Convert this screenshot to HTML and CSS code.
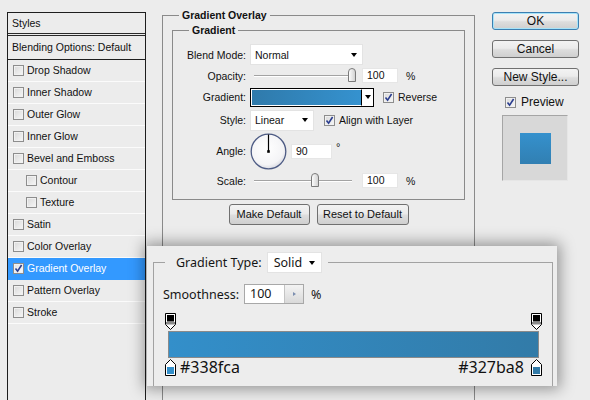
FILE: index.html
```html
<!DOCTYPE html>
<html>
<head>
<meta charset="utf-8">
<link rel="stylesheet" href="styles.css">
</head>
<body>
<div class="dialog">
  <div class="styles-panel">
    <div class="sp-head">Styles</div>
    <div class="sp-blend">Blending Options: Default</div>
    <div class="sp-row"><span class="cb"></span>Drop Shadow</div>
    <div class="sp-row"><span class="cb"></span>Inner Shadow</div>
    <div class="sp-row"><span class="cb"></span>Outer Glow</div>
    <div class="sp-row"><span class="cb"></span>Inner Glow</div>
    <div class="sp-row"><span class="cb"></span>Bevel and Emboss</div>
    <div class="sp-row sub"><span class="cb"></span>Contour</div>
    <div class="sp-row sub"><span class="cb"></span>Texture</div>
    <div class="sp-row"><span class="cb"></span>Satin</div>
    <div class="sp-row"><span class="cb"></span>Color Overlay</div>
    <div class="sp-row sel"><span class="cb"><svg width="9" height="9" viewBox="0 0 9 9"><path d="M1.5 4.5 L3.6 7.2 L7.6 1" fill="none" stroke="#2a3d8f" stroke-width="1.6"/></svg></span>Gradient Overlay</div>
    <div class="sp-row"><span class="cb"></span>Pattern Overlay</div>
    <div class="sp-row"><span class="cb"></span>Stroke</div>
  </div>

  <div class="main">
    <fieldset class="fs-outer">
      <legend class="lg-outer">Gradient Overlay</legend>
      <fieldset class="fs-inner">
        <legend class="lg-inner">Gradient</legend>
        <div class="row r1">
          <span class="lbl">Blend Mode:</span>
          <div class="select sel-blend"><span>Normal</span><i class="arr"></i></div>
        </div>
        <div class="row r2">
          <span class="lbl">Opacity:</span>
          <div class="slider">
            <div class="track"></div>
            <svg class="thumb thumb-op" width="10" height="14" viewBox="0 0 10 14"><defs><linearGradient id="tg" x1="0" x2="1"><stop offset="0" stop-color="#fff"/><stop offset="1" stop-color="#cfcfcf"/></linearGradient></defs><path d="M1.5 4 Q1.5 0.5 5 0.5 Q8.5 0.5 8.5 4 V13.5 H1.5 Z" fill="url(#tg)" stroke="#7a7a7a"/></svg>
          </div>
          <div class="num">100</div>
          <span class="unit">%</span>
        </div>
        <div class="row r3">
          <span class="lbl">Gradient:</span>
          <div class="gpick"><div class="gswatch"></div><div class="gdrop"><i class="arr"></i></div></div>
          <span class="cb on cb-rev"><svg width="9" height="9" viewBox="0 0 9 9"><path d="M1.5 4.5 L3.6 7.2 L7.6 1" fill="none" stroke="#2a3d8f" stroke-width="1.6"/></svg></span>
          <span class="cbl">Reverse</span>
        </div>
        <div class="row r4">
          <span class="lbl">Style:</span>
          <div class="select sel-style"><span>Linear</span><i class="arr"></i></div>
          <span class="cb on cb-align"><svg width="9" height="9" viewBox="0 0 9 9"><path d="M1.5 4.5 L3.6 7.2 L7.6 1" fill="none" stroke="#2a3d8f" stroke-width="1.6"/></svg></span>
          <span class="cbl">Align with Layer</span>
        </div>
        <div class="row r5">
          <span class="lbl">Angle:</span>
          <svg class="dial" width="37" height="37" viewBox="0 0 37 37"><defs><radialGradient id="dg" cx="0.45" cy="0.4" r="0.6"><stop offset="0" stop-color="#ffffff"/><stop offset="0.8" stop-color="#f4f4f6"/><stop offset="1" stop-color="#dcdde4"/></radialGradient></defs><circle cx="18.5" cy="18.5" r="17.3" fill="url(#dg)" stroke="#4d5b84" stroke-width="1.3"/><line x1="18.5" y1="18.5" x2="18.5" y2="1.5" stroke="#000" stroke-width="1.2"/><rect x="17.2" y="17.2" width="2.6" height="2.6" fill="#000"/></svg>
          <div class="num num-angle">90</div>
          <span class="deg">°</span>
        </div>
        <div class="row r6">
          <span class="lbl">Scale:</span>
          <div class="slider">
            <div class="track"></div>
            <svg class="thumb thumb-sc" width="10" height="14" viewBox="0 0 10 14"><path d="M1.5 4 Q1.5 0.5 5 0.5 Q8.5 0.5 8.5 4 V13.5 H1.5 Z" fill="url(#tg)" stroke="#7a7a7a"/></svg>
          </div>
          <div class="num">100</div>
          <span class="unit">%</span>
        </div>
      </fieldset>
      <div class="btns">
        <div class="btn btn-make">Make Default</div>
        <div class="btn btn-reset">Reset to Default</div>
      </div>
    </fieldset>
  </div>

  <div class="side">
    <div class="pbtn ok">OK</div>
    <div class="pbtn">Cancel</div>
    <div class="pbtn">New Style...</div>
    <div class="prev-row"><span class="cb on"><svg width="9" height="9" viewBox="0 0 9 9"><path d="M1.5 4.5 L3.6 7.2 L7.6 1" fill="none" stroke="#2a3d8f" stroke-width="1.6"/></svg></span><span>Preview</span></div>
    <div class="prev-box"><div class="prev-sq"></div></div>
  </div>
</div>

<div class="popup">
  <fieldset class="fs-pop">
    <legend class="lg-pop"><span>Gradient Type:</span><div class="select sel-type"><span>Solid</span><i class="arr"></i></div></legend>
    <div class="smooth">
      <span>Smoothness:</span>
      <div class="sinput"><span class="sval">100</span><span class="spin"><i class="rtri"></i></span></div>
      <span class="spct">%</span>
    </div>
    <div class="stops">
      <svg width="11" height="17" viewBox="0 0 11 17"><path d="M0.5 0.5 H10.5 V11.5 L5.5 16.5 L0.5 11.5 Z" fill="#fff" stroke="#000"/><rect x="2" y="2" width="7" height="6.5" fill="#000"/><rect x="1" y="9" width="9" height="2.5" fill="#8a8a8a"/></svg>
      <svg width="11" height="17" viewBox="0 0 11 17"><path d="M0.5 0.5 H10.5 V11.5 L5.5 16.5 L0.5 11.5 Z" fill="#fff" stroke="#000"/><rect x="2" y="2" width="7" height="6.5" fill="#000"/><rect x="1" y="9" width="9" height="2.5" fill="#8a8a8a"/></svg>
    </div>
    <div class="gbar"></div>
    <div class="cstops">
      <div class="cst"><svg width="11" height="17" viewBox="0 0 11 17"><path d="M5.5 0.5 L10.5 5.5 V16.5 H0.5 V5.5 Z" fill="#fff" stroke="#000"/><rect x="2" y="8" width="7" height="7" fill="#338fca"/></svg><span class="hex">#338fca</span></div>
      <div class="cst"><span class="hex">#327ba8</span><svg width="11" height="17" viewBox="0 0 11 17"><path d="M5.5 0.5 L10.5 5.5 V16.5 H0.5 V5.5 Z" fill="#fff" stroke="#000"/><rect x="2" y="8" width="7" height="7" fill="#327ba8"/></svg></div>
    </div>
  </fieldset>
</div>
</body>
</html>
```

FILE: styles.css
```css
* { box-sizing: border-box; }

body {
  margin: 0;
  width: 590px;
  height: 400px;
  overflow: hidden;
  position: relative;
  background: #ececec;
  font-family: "Liberation Sans", Arial, sans-serif;
  font-size: 10.5px;
  color: #111;
}

.dialog {
  display: flex;
  align-items: flex-start;
  height: 400px;
  overflow: hidden;
}

/* ---------- Styles list ---------- */
.styles-panel {
  flex: none;
  margin-left: 7px;
  margin-top: 12px;
  width: 139px;
  height: 388px;
  border: 1px solid #1e1e1e;
  border-bottom: none;
}

.sp-head {
  height: 23px;
  line-height: 20px;
  padding-left: 4px;
  border-bottom: 3px double #2a2a2a;
}

.sp-blend {
  height: 24px;
  line-height: 22px;
  padding-left: 4px;
  border-bottom: 1px solid #1e1e1e;
}

.sp-row {
  height: 22px;
  border-bottom: 1px solid #fbfbfb;
  display: flex;
  align-items: center;
  padding-left: 5px;
  padding-bottom: 1px;
  gap: 3px;
}

.sp-row.sub { padding-left: 18px; }

.sp-row.sel {
  background: #3399ff;
  color: #fff;
  border-bottom-color: #3399ff;
}

.cb {
  flex: none;
  width: 11px;
  height: 11px;
  border: 1px solid #8d8d8d;
  background: linear-gradient(135deg, #d9d9d9, #f7f7f7);
  box-shadow: inset 0 0 0 1px #f1f1f1;
  display: flex;
  align-items: center;
  justify-content: center;
}

.sp-row.sel .cb { background: linear-gradient(135deg, #e2e2e2, #fbfbfb); }

/* ---------- Middle ---------- */
.main {
  flex: none;
  margin-left: 16px;
}

.fs-outer {
  margin: 8px 0 0;
  padding: 1px 9px 0;
  width: 313px;
  height: 400px;
  border: 1px solid #8a8a8a;
  min-width: 0;
}

.lg-outer, .lg-inner {
  font-weight: bold;
  line-height: 14px;
  padding: 0 3px;
  color: #111;
}

.lg-outer { margin-left: 7px; }
.lg-inner { margin-left: 16px; }

.fs-inner {
  margin: 0;
  padding: 0 0 8px;
  border: 1px solid #8a8a8a;
  min-width: 0;
}

.row {
  display: flex;
  align-items: center;
}

.lbl {
  flex: none;
  width: 73px;
  margin-right: 4px;
  text-align: right;
}

.r1 { height: 21px; margin-top: 7px; }
.r2 { height: 21px; }
.r3 { height: 22px; }
.r4 { height: 24px; }
.r5 { height: 38px; }
.r6 { height: 21px; }

.select {
  position: relative;
  height: 21px;
  background: #fff;
  border: 1px solid #e3e3e3;
  display: flex;
  align-items: center;
  justify-content: space-between;
  padding: 0 5px 0 4px;
}

.sel-blend { width: 113px; }
.sel-style { width: 64px; }

.arr {
  display: block;
  width: 0;
  height: 0;
  border-left: 3.5px solid transparent;
  border-right: 3.5px solid transparent;
  border-top: 4px solid #000;
}

.slider {
  position: relative;
  width: 108px;
  height: 15px;
  flex: none;
}

.track {
  position: absolute;
  left: 4px;
  top: 7px;
  width: 98px;
  height: 2px;
  border-top: 1px solid #a3a3a3;
  border-bottom: 1px solid #fff;
}

.thumb { position: absolute; top: 0; }
.thumb-op { left: 97px; }
.thumb-sc { left: 60px; }

.num {
  flex: none;
  width: 36px;
  height: 15px;
  margin-left: 4px;
  background: #fff;
  border: 1px solid #e6e6e6;
  padding-left: 4px;
  line-height: 13px;
}

.unit { margin-left: 8px; }

.gpick {
  flex: none;
  width: 124px;
  height: 19px;
  border: 1px solid #000;
  display: flex;
  background: #fff;
}

.gswatch {
  flex: 1;
  border: 1px solid #fff;
  border-right: 1px solid #000;
  background: linear-gradient(to right, #2f7aab, #3592cf);
}

.gdrop {
  width: 11px;
  display: flex;
  align-items: center;
  justify-content: center;
}

.cb-rev { margin-left: 9px; }
.cb-align { margin-left: 10px; }
.cbl { margin-left: 4px; }

.dial { flex: none; margin-left: 0; }
.num-angle { width: 41px; margin-left: 4px; }
.deg { align-self: flex-start; margin-top: 9px; margin-left: 4px; font-size: 11px; }

.btns {
  display: flex;
  justify-content: center;
  gap: 7px;
  margin-top: 4px;
}

.btn {
  height: 21px;
  border: 1px solid #707070;
  border-radius: 3px;
  background: linear-gradient(#f3f3f3, #ebebeb 45%, #dddddd 55%, #cfcfcf);
  line-height: 19px;
  text-align: center;
  font-size: 11px;
}

.btn-make { width: 81px; }
.btn-reset { width: 92px; }

/* ---------- Right side ---------- */
.side {
  flex: none;
  margin-left: 17px;
  margin-top: 12px;
  width: 87px;
  display: flex;
  flex-direction: column;
  font-size: 12px;
}

.pbtn {
  height: 18px;
  margin-bottom: 10px;
  border: 1px solid #707070;
  border-radius: 3px;
  background: linear-gradient(#f3f3f3, #ebebeb 45%, #dddddd 55%, #cfcfcf);
  text-align: center;
  line-height: 16px;
}

.pbtn.ok {
  border-color: #3c7fb1;
  box-shadow: inset 0 0 0 1px #a6e3f9;
}

.prev-row {
  height: 12px;
  display: flex;
  align-items: center;
  gap: 5px;
  margin-left: 13px;
}

.prev-box {
  margin-top: 7px;
  margin-left: 10px;
  width: 66px;
  height: 66px;
  background: #d8d8d8;
  border: 1px solid #a5a5a5;
  border-right-color: #e6e6e6;
  border-bottom-color: #e6e6e6;
  display: flex;
  align-items: center;
  justify-content: center;
}

.prev-sq {
  width: 31px;
  height: 31px;
  background: linear-gradient(#3591cd, #317fb2);
}

/* ---------- Gradient editor popup ---------- */
.popup {
  position: absolute;
  left: 147px;
  top: 246px;
  width: 410px;
  height: 140px;
  padding: 6px 4px 0 6px;
  background: #ededed;
  box-shadow: 0 0 14px 3px rgba(0, 0, 0, 0.38);
  overflow: hidden;
  font-family: "Noto Sans", "Liberation Sans", sans-serif;
  font-size: 12.5px;
  color: #151515;
}

.fs-pop {
  margin: 0;
  padding: 0 0 0 9px;
  height: 200px;
  border: 1px solid #a2a2a2;
  min-width: 0;
}

.lg-pop {
  margin-left: 2px;
  padding: 0 6px 0 11px;
  display: flex;
  align-items: center;
  gap: 5px;
  height: 21px;
}

.sel-type {
  width: 55px;
  padding: 0 6px 0 6px;
  font-size: 12.5px;
}

.smooth {
  margin-top: 11px;
  height: 20px;
  display: flex;
  align-items: center;
}

.sinput {
  margin-left: 5px;
  width: 60px;
  height: 20px;
  border: 1px solid #a8a8a8;
  background: #fff;
  display: flex;
}

.sval {
  flex: 1;
  padding-left: 5px;
  line-height: 18px;
}

.spin {
  width: 19px;
  background: linear-gradient(#f3f3f3, #d9d9d9);
  border-left: 1px solid #c4c4c4;
  display: flex;
  align-items: center;
  justify-content: center;
}

.rtri {
  display: block;
  width: 0;
  height: 0;
  border-top: 2.5px solid transparent;
  border-bottom: 2.5px solid transparent;
  border-left: 3px solid #7d8fb0;
}

.spct { margin-left: 7px; }

.stops {
  margin-top: 9px;
  margin-left: 2px;
  width: 377px;
  height: 17px;
  display: flex;
  justify-content: space-between;
}

.stops svg, .cst svg { display: block; flex: none; }

.gbar {
  margin-top: 1px;
  margin-left: 5px;
  width: 371px;
  height: 27px;
  border: 1px solid #8a8a8a;
  background: linear-gradient(to right, #338fca, #327ba8);
}

.cstops {
  margin-top: 1px;
  margin-left: 2px;
  width: 377px;
  height: 17px;
  display: flex;
  justify-content: space-between;
}

.cst {
  display: flex;
  align-items: center;
  gap: 4px;
}

.cst:last-child { gap: 7px; }

.hex {
  font-size: 16px;
  line-height: 17px;
  color: #111;
}
```
